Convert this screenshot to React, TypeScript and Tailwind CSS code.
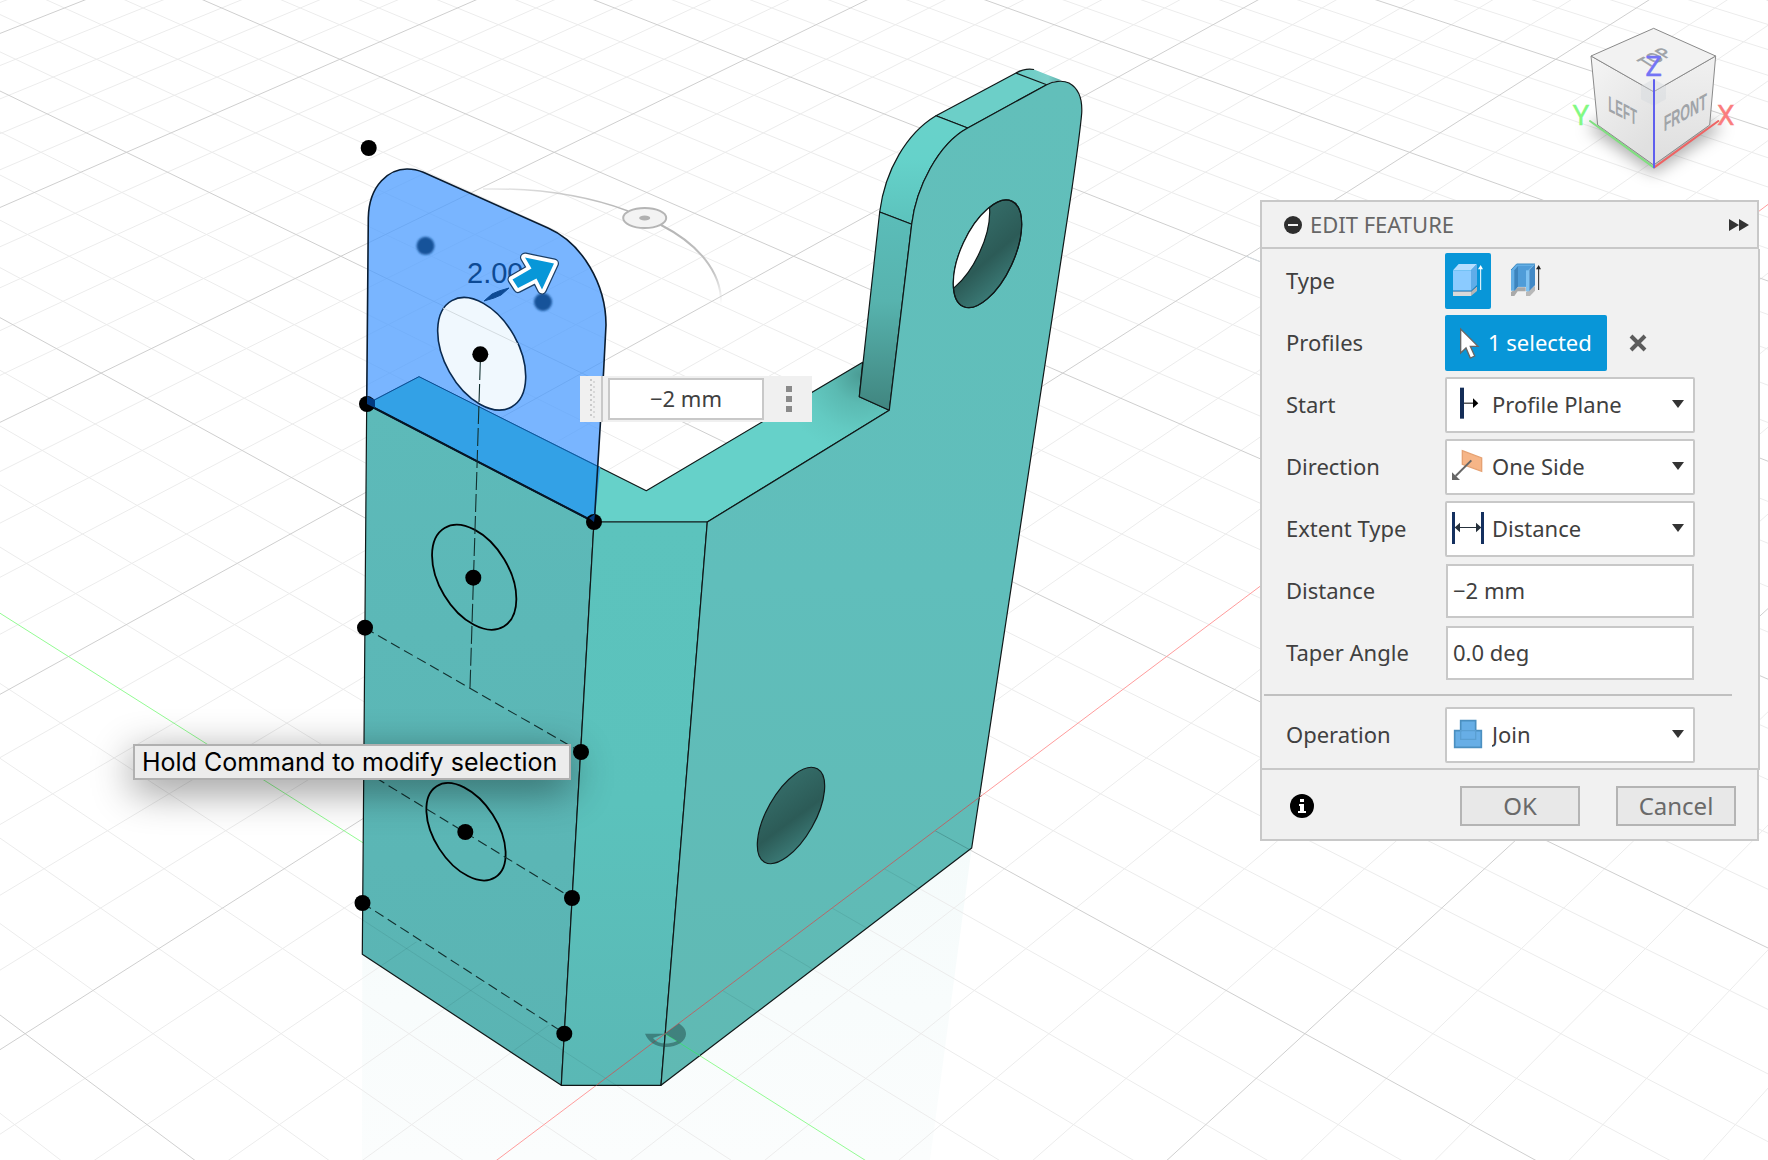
import type { ReactNode } from 'react';

/* ---------- ground grid, projected in perspective ---------- */

const project = (i: number, j: number): [number, number] => {
  const w = 1 + 0.08268 * (i + j);
  return [
    (665 + 347.3 * i - 292.6 * j) / w,
    (1033.7 - 134.31 * (i + j)) / w,
  ];
};

const segment = (a: [number, number], b: [number, number]) =>
  `M${a[0].toFixed(1)} ${a[1].toFixed(1)}L${b[0].toFixed(1)} ${b[1].toFixed(1)}`;

const lineX = (j: number) => segment(project(-2 - j, j), project(12 - j, j));
const lineY = (i: number) => segment(project(i, -2 - i), project(i, 12 - i));

const minorParts: string[] = [];
const majorParts: string[] = [];
for (let k = -25; k <= 50; k++) {
  const target = k % 5 === 0 ? majorParts : minorParts;
  if (k !== 0) target.push(lineX(k / 5), lineY(k / 5));
}
const minorGrid = minorParts.join('');
const majorGrid = majorParts.join('');
const axisX = lineX(0);
const axisY = lineY(0);

const points: [number, number][] = [
  [368.7, 148], [480.3, 354.3], [367, 404], [594, 522], [473.3, 577.7], [365, 627.7],
  [581, 752], [465.3, 832], [572, 898], [362.5, 903], [564.3, 1033.7],
];

const profile =
  'M366.7 404L368.3 218C369 184 390 169 407 169C413 169 418 170 423.3 172.3L548 228C582 243 606 284 606 325L603.5 373L594.3 522Z';
const rightFace =
  'M707.3 522L889.3 410.3L911.7 224.3C916 188 938 144 967.7 128L1046.7 84.7C1053 81 1063 80 1069 83C1078 88 1082.5 99 1081.7 113.3C1080 133 1076 160 1072 188.3L1035 430L971.7 848L661 1085.3Z';
const arrow =
  'M525 257.5L554 263.5L542 289.5L536.5 278.5L518 288L512.5 279.5L531.5 268.5Z';

function Viewport() {
  return (
    <svg
      className="absolute inset-0 h-full w-full"
      viewBox="0 0 1768 1160"
      preserveAspectRatio="xMidYMid slice"
      role="img"
      aria-label="Bracket model with selected profile"
    >
      <defs>
        <linearGradient id="leftFace" x1="0" y1="0" x2="0" y2="1">
          <stop offset="0" stopColor="#5dbab9" />
          <stop offset="1" stopColor="#5ab4b3" />
        </linearGradient>
        <linearGradient id="chamfer" x1="0" y1="0" x2="0" y2="1">
          <stop offset="0" stopColor="#5cc3bd" />
          <stop offset="0.5" stopColor="#5bc2bc" />
          <stop offset="1" stopColor="#5ab8b5" />
        </linearGradient>
        <linearGradient id="rightFace" x1="0" y1="0" x2="0" y2="1">
          <stop offset="0" stopColor="#62bfba" />
          <stop offset="0.5" stopColor="#60bebb" />
          <stop offset="1" stopColor="#60b9b3" />
        </linearGradient>
        <linearGradient id="strip" x1="0" y1="0" x2="0" y2="1">
          <stop offset="0" stopColor="#5bbdb9" />
          <stop offset="0.45" stopColor="#57b3ae" />
          <stop offset="1" stopColor="#40857f" />
        </linearGradient>
        <linearGradient id="bend" x1="0" y1="0" x2="0" y2="1">
          <stop offset="0" stopColor="#69d2ca" />
          <stop offset="0.4" stopColor="#65d2ca" />
          <stop offset="1" stopColor="#5cc2bc" />
        </linearGradient>
        <radialGradient id="topFace" gradientUnits="userSpaceOnUse" cx="860" cy="375" r="80">
          <stop offset="0" stopColor="#4b9c95" />
          <stop offset="0.35" stopColor="#5bbab2" />
          <stop offset="0.7" stopColor="#63cac2" />
          <stop offset="1" stopColor="#66d1c9" />
        </radialGradient>
        <linearGradient id="bore" x1="0" y1="0" x2="1" y2="1">
          <stop offset="0" stopColor="#37716d" />
          <stop offset="0.55" stopColor="#2c5b57" />
          <stop offset="1" stopColor="#418783" />
        </linearGradient>
        <linearGradient id="capEdge" x1="0" y1="0" x2="1" y2="0">
          <stop offset="0" stopColor="#66ccc5" />
          <stop offset="0.7" stopColor="#7dd0ca" />
          <stop offset="1" stopColor="#55aaa5" />
        </linearGradient>
        <linearGradient id="reflection" x1="0" y1="0" x2="0" y2="1">
          <stop offset="0" stopColor="#f5fbfb" />
          <stop offset="1" stopColor="#fbfdfd" />
        </linearGradient>
        <linearGradient id="arcLeft" x1="0" y1="0" x2="1" y2="0">
          <stop offset="0" stopColor="#b9b9b9" stopOpacity="0.3" />
          <stop offset="1" stopColor="#b5b5b5" />
        </linearGradient>
        <linearGradient id="arcRight" x1="0" y1="0" x2="0" y2="1">
          <stop offset="0" stopColor="#b5b5b5" />
          <stop offset="0.6" stopColor="#c4c4c4" />
          <stop offset="1" stopColor="#cfcfcf" stopOpacity="0" />
        </linearGradient>
        <filter id="soft" x="-50%" y="-50%" width="200%" height="200%">
          <feGaussianBlur stdDeviation="1" />
        </filter>
        <clipPath id="belowFloor">
          <path d="M362.5 908L563 1033.7H665L977 800L971.7 848L661 1085.3H561.3L362.3 954.3Z" />
        </clipPath>
        <clipPath id="throughHole">
          <ellipse cx="987.5" cy="253.8" rx="26.5" ry="58" transform="rotate(24.8 987.5 253.8)" />
        </clipPath>
      </defs>

      <rect width="1768" height="1160" fill="#fff" />
      <path d="M362.3 954L561 1085H661L971.7 848L930 1160H362Z" fill="url(#reflection)" />

      <g fill="none" strokeWidth="1">
        <path d={minorGrid} stroke="#ececec" />
        <path d={majorGrid} stroke="#cfcfcf" />
        <path d={axisX} stroke="#ff9c9c" />
        <path d={axisY} stroke="#93fb93" />
      </g>

      {/* rotation handle */}
      <path d="M483 189C535 188 585 195 628 211" fill="none" stroke="url(#arcLeft)" strokeWidth="1.5" />
      <path d="M661 225C698 244 722 272 721 304" fill="none" stroke="url(#arcRight)" strokeWidth="2" />
      <ellipse cx="644.7" cy="218" rx="21.5" ry="10" fill="#f3f3f3" stroke="#b5b5b5" strokeWidth="2" />
      <ellipse cx="644.7" cy="218" rx="5.5" ry="2.5" fill="#b0b0b0" />

      {/* solid body */}
      <g stroke="#101818" strokeWidth="1.2" strokeLinejoin="round">
        <path
          d="M366.7 404L419 376.7L646.3 490.7L862.7 362.3L859.3 396.7L889.3 410.3L707.3 522H594Z"
          fill="url(#topFace)"
        />
        <path d="M366.7 404L594 522L561.3 1085.3L362.3 954.3Z" fill="url(#leftFace)" />
        <path d="M594 522H707.3L661 1085.3H561.3Z" fill="url(#chamfer)" />
        <path
          d="M1016 73C1022 70 1028 68.5 1034 69.5L1062 80.5C1056 80.5 1051 82 1046.7 84.7Z"
          fill="url(#capEdge)"
          stroke="none"
        />
        <path d="M936 115.7L1016 73L1046.7 84.7L967.7 128Z" fill="#6ccfc8" />
        <path d="M1016 73C1022 69.5 1028 68.5 1034 69.5" fill="none" />
        <path d="M879.7 212C885 170 907 133 936 115.7L967.7 128C938 144 916 188 911.7 224.3Z" fill="url(#bend)" />
        <path d="M879.7 212L911.7 224.3L889.3 410.3L859.3 396.7Z" fill="url(#strip)" />
        <path d={rightFace} fill="url(#rightFace)" />
        <ellipse cx="987.5" cy="253.8" rx="26.5" ry="58" transform="rotate(24.8 987.5 253.8)" fill="url(#bore)" />
        <g clipPath="url(#throughHole)">
          <ellipse cx="955.5" cy="241.5" rx="26.5" ry="58" transform="rotate(24.8 955.5 241.5)" fill="#fff" />
        </g>
        <ellipse cx="987.5" cy="253.8" rx="26.5" ry="58" transform="rotate(24.8 987.5 253.8)" fill="none" />
        <ellipse cx="791" cy="815.5" rx="24" ry="53.6" transform="rotate(29.5 791 815.5)" fill="url(#bore)" />
      </g>

      {/* part of the floor seen over the body */}
      <g clipPath="url(#belowFloor)" fill="none">
        <path d={minorGrid} stroke="#205050" strokeOpacity="0.12" />
        <path d={majorGrid} stroke="#205050" strokeOpacity="0.3" />
        <path d={axisY} stroke="#3fdc7c" />
      </g>
      <path d={segment(project(-0.23, 0), project(1.19, 0))} stroke="#b5696a" strokeWidth="1" />
      <path
        d="M645 1033.7H665L679 1023.5C684 1027 686 1030 686 1034C686 1041 677 1047 666 1047C655 1047 648 1041 645 1033.7ZM653 1038C656 1042 661 1044 668 1043.5C672 1043 675 1042 677 1041L665 1033.7Z"
        fill="#1f4a48"
        fillOpacity="0.5"
        fillRule="evenodd"
      />

      {/* sketch profile */}
      <path d={profile} fill="#4a9bff" fillOpacity="0.74" />
      <path d="M366.7 404L419 376.7L600.3 467L594.3 522Z" fill="#33a1e6" />
      <path d="M366.7 404L419 376.7L599 467" fill="none" stroke="#0c4f93" strokeWidth="1" />
      <path d={profile} fill="none" stroke="#0a1c30" strokeWidth="1.6" />
      <ellipse
        cx="481.7"
        cy="353.8"
        rx="37.1"
        ry="61"
        transform="rotate(-29.3 481.7 353.8)"
        fill="#f0f8fe"
        stroke="#0a2a50"
        strokeWidth="1.6"
      />
      <path
        d={segment(project(4, 1), project(4, 0.77)) + segment([443, 308], [518, 344])}
        stroke="#d3dbe0"
        strokeWidth="1"
        clipPath="none"
      />
      <path d="M366.7 404L594.3 522" stroke="#061526" strokeWidth="2" />
      <ellipse cx="474.2" cy="577.2" rx="35" ry="57.5" transform="rotate(-31 474.2 577.2)" fill="none" stroke="#000" strokeWidth="1.8" />
      <ellipse cx="466" cy="831.7" rx="31.7" ry="54.2" transform="rotate(-32.8 466 831.7)" fill="none" stroke="#000" strokeWidth="1.8" />
      <g fill="none" stroke="#12302f" strokeWidth="1.1" strokeDasharray="10 5">
        <path d="M480.3 362L470 688" strokeDasharray="18 4" />
        <path d="M365 628L581 752" />
        <path d="M363 770L572 898" />
        <path d="M362.5 903L564 1033" />
      </g>
      {points.map(([x, y]) => (
        <circle key={`${x}-${y}`} cx={x} cy={y} r="8" fill="#000" />
      ))}
      <path d="M367 396L375 400V408L367 404ZM595 514L589 518L594 522Z" fill="#023a80" />
      <g fill="#17539a" filter="url(#soft)">
        <circle cx="425.5" cy="245.8" r="9" />
        <circle cx="543" cy="302" r="9" />
      </g>
      <text x="467" y="283" fontSize="29" fill="#0d4a94" fontFamily="'Liberation Sans', Arial, sans-serif">
        2.00
      </text>
      <path d="M484 301L492 294L499 291L509 288L501 295L494 298Z" fill="#0d4a94" stroke="#0d4a94" />
      <g strokeLinejoin="round">
        <path d={arrow} fill="#fff" stroke="#1c3f66" strokeWidth="10" />
        <path d={arrow} fill="#0797d8" stroke="#fff" strokeWidth="7.5" />
        <path d={arrow} fill="#0797d8" />
      </g>
    </svg>
  );
}

function ViewCube() {
  return (
    <svg className="h-[180px] w-52 self-end" viewBox="0 0 624 540" role="img" aria-label="View cube">
      <defs>
        <linearGradient id="cubeLeft" x1="0" y1="0" x2="0.6" y2="1">
          <stop offset="0" stopColor="#f5f5f5" />
          <stop offset="1" stopColor="#e0e0e0" />
        </linearGradient>
        <linearGradient id="cubeRight" x1="0" y1="0" x2="0" y2="1">
          <stop offset="0" stopColor="#f1f1f1" />
          <stop offset="1" stopColor="#dedede" />
        </linearGradient>
        <filter id="cubeShadow" x="-50%" y="-50%" width="200%" height="200%">
          <feGaussianBlur stdDeviation="24" />
        </filter>
      </defs>
      <path d="M80 350L281 280L490 350L281 490Z" fill="#000" fillOpacity="0.32" filter="url(#cubeShadow)" />
      <g stroke="#8a8a8a" strokeWidth="3" strokeLinejoin="round">
        <path d="M93 138L281 245V465L113 345Z" fill="url(#cubeLeft)" />
        <path d="M281 245L467 138L449 345L281 465Z" fill="url(#cubeRight)" />
        <path d="M281 55L467 138L281 245L93 138Z" fill="#f2f2f2" />
      </g>
      <path d="M281 207L318 228V268L281 287L243 268V228Z" fill="#d5d9dd" fillOpacity="0.45" />
      <g fontFamily="'Liberation Sans', Arial, sans-serif" fontWeight="bold" fontSize="66" fill="#a0a4a8">
        <text transform="matrix(0.52 0.27 0 1 145 302)">LEFT</text>
        <text transform="matrix(0.57 -0.31 0 1 311 365)">FRONT</text>
        <text transform="matrix(0.58 -0.31 0.8 0.5 264 175)">TOP</text>
      </g>
      <g strokeWidth="6" strokeLinecap="round">
        <path d="M90 333L281 472" stroke="#7fe07f" />
        <path d="M283 472L475 333" stroke="#ee6363" />
        <path d="M282 210V472" stroke="#5f5fee" />
      </g>
      <g fontFamily="Roboto, sans-serif" fontSize="84" textAnchor="middle">
        <text x="281" y="197" fill="#7474f5" stroke="#7474f5">Z</text>
        <text x="63" y="345" fill="#82f982" stroke="#82f982">Y</text>
        <text x="497" y="345" fill="#fa7d7d" stroke="#fa7d7d">X</text>
      </g>
    </svg>
  );
}

/* ---------- icons ---------- */

function Icon({ box, children }: { box: string; children: ReactNode }) {
  return (
    <svg className="h-14 w-[46px] shrink-0" viewBox={box} aria-hidden="true">
      {children}
    </svg>
  );
}

const solidIcon = (
  <Icon box="585 189 138 168">
    <path d="M609 303H663V318H609Z" fill="#d9d9d9" />
    <path d="M663 303L681 288V303L663 318Z" fill="#b5b5b5" />
    <path d="M609 241H663V302H609Z" fill="#8bcbff" />
    <path d="M609 241L626 222H681L663 241Z" fill="#b4deff" />
    <path d="M663 241L681 222V285L663 302Z" fill="#5fade9" />
    <path d="M609 303.5H664L681 288" fill="none" stroke="#1f6ba8" strokeWidth="2.5" />
    <path d="M692 300V230" stroke="#fff" strokeWidth="3" />
    <path d="M684 238L692 225L699 238Z" fill="#fff" />
  </Icon>
);

const thinIcon = (
  <Icon box="759 189 138 168">
    <path d="M783 306L805 292H827V304H803L793 318H783Z" fill="#a9a9a9" />
    <path d="M828 306L855 288V302L840 318H828Z" fill="#b8b8b8" />
    <path d="M783 240L800 222H855L838 240V302H828V290H804L793 302H783Z" fill="#63aee5" />
    <path d="M804 228H846L828 246V290H804Z" fill="#4f9cd8" />
    <path d="M793 241L804 228V290L793 302Z" fill="#3d84bd" />
    <path d="M828 241H838V304H828Z" fill="#7fc2f2" />
    <path d="M838 240L855 222V286L838 302Z" fill="#4189c6" />
    <path d="M783 240L800 222H855" fill="none" stroke="#3c8ac2" strokeWidth="3" />
    <path d="M866 300V230" stroke="#222" strokeWidth="3" />
    <path d="M858 238L866 225L873 238Z" fill="#222" />
  </Icon>
);

const startIcon = (
  <Icon box="585 562 138 168">
    <path d="M630 594H642V687H630Z" fill="#142d57" />
    <path d="M642 640.5H672" stroke="#000" strokeWidth="3" />
    <path d="M669 626L685 640.5L669 655Z" fill="#000" />
  </Icon>
);

const directionIcon = (
  <Icon box="585 747 138 168">
    <path d="M637 782L695 804V844L637 823Z" fill="#f6b587" stroke="#e6a273" strokeWidth="4" />
    <path d="M664 811L617 858" stroke="#666" strokeWidth="6" />
    <path d="M606 847V870H630Z" fill="#666" />
  </Icon>
);

const extentIcon = (
  <Icon box="585 -27 138 168">
    <path d="M606 6H615V102H606ZM693 6H702V102H693Z" fill="#14305f" />
    <path d="M622 52.5H686" stroke="#25303b" strokeWidth="3" />
    <path d="M614 52.5L630 38V67ZM694 52.5L678 38V67Z" fill="#25303b" />
  </Icon>
);

const joinIcon = (
  <Icon box="585 591 138 168">
    <path d="M632 632H677V662H694V712H614V662H632Z" fill="#67aee6" stroke="#4b8fc0" strokeWidth="5" />
    <path d="M632 662H677V688H632Z" fill="none" stroke="#5a9fd2" strokeWidth="4" />
  </Icon>
);

/* ---------- panel ---------- */

function Row({ label, htmlFor, children }: { label: string; htmlFor?: string; children: ReactNode }) {
  return (
    <div className="flex h-14 items-center">
      <label htmlFor={htmlFor} className="w-[159px] shrink-0 pb-0.5 whitespace-nowrap">
        {label}
      </label>
      {children}
    </div>
  );
}

function SelectField({ id, label, value, icon }: { id: string; label: string; value: string; icon: ReactNode }) {
  return (
    <Row label={label} htmlFor={id}>
      <div className="relative h-14 w-[250px]">
        <select
          id={id}
          className="h-full w-full appearance-none rounded-xs border-2 border-[#c8c8c8] bg-white pb-0.5 pl-[45px] text-[#404040] outline-none"
        >
          <option>{value}</option>
        </select>
        <div className="pointer-events-none absolute inset-y-0 left-0">{icon}</div>
        <svg className="pointer-events-none absolute top-[23px] right-[11px] h-2 w-3" viewBox="0 0 12 8" aria-hidden="true">
          <path d="M0 0H12L6 8Z" fill="#333" />
        </svg>
      </div>
    </Row>
  );
}

function TextField({ id, label, value }: { id: string; label: string; value: string }) {
  return (
    <Row label={label} htmlFor={id}>
      <input
        id={id}
        defaultValue={value}
        className="ml-px h-[54px] w-[248px] border-2 border-[#c8c8c8] bg-white pb-0.5 pl-[5px] text-[#404040] outline-none"
      />
    </Row>
  );
}

function EditPanel() {
  return (
    <section className="w-[500px] text-[22px] leading-7 text-[#404040]" aria-label="Edit feature">
      <header className="mr-px flex h-[49px] items-center border-2 border-[#c8c8c8] bg-[#f1f1f1] pr-2 pl-[22px]">
        <button type="button" aria-label="Collapse" className="mr-2">
          <svg className="h-[18px] w-[18px]" viewBox="0 0 18 18" aria-hidden="true">
            <circle cx="9" cy="9" r="9" fill="#2e2e2e" />
            <path d="M4 9H14" stroke="#f1f1f1" strokeWidth="2" />
          </svg>
        </button>
        <h2 className="pb-0.5 text-[#666]">EDIT FEATURE</h2>
        <button type="button" aria-label="Dock panel" className="ml-auto">
          <svg className="h-3 w-5" viewBox="0 0 20 12" aria-hidden="true">
            <path d="M0 0L10 6L0 12ZM10 0L20 6L10 12Z" fill="#333" />
          </svg>
        </button>
      </header>

      <div className="flex flex-col gap-1.5 border-x-2 border-b-2 border-[#c8c8c8] bg-[#f1f1f1] pt-1 pb-[5px] pl-6">
        <Row label="Type">
          <button type="button" aria-label="Extrude" className="rounded-xs bg-[#0896d8]">
            {solidIcon}
          </button>
          <button type="button" aria-label="Thin extrude" className="ml-3">
            {thinIcon}
          </button>
        </Row>
        <Row label="Profiles">
          <button
            type="button"
            className="flex h-14 w-[162px] items-center rounded-xs bg-[#0896d8] text-white"
          >
            <svg className="mr-2 ml-[14px] h-8 w-[21px]" viewBox="627 408 63 96" aria-hidden="true">
              <path
                d="M632 414V486L648 471L661 501L674 495L661 466H684Z"
                fill="#fff"
                stroke="#666"
                strokeWidth="4"
              />
            </svg>
            <span className="pb-0.5">1 selected</span>
          </button>
          <button type="button" aria-label="Clear profiles" className="ml-[22px]">
            <svg className="h-[18px] w-[18px]" viewBox="0 0 18 18" aria-hidden="true">
              <path d="M2 2L16 16M16 2L2 16" stroke="#5c5c5c" strokeWidth="4" />
            </svg>
          </button>
        </Row>
        <SelectField id="start" label="Start" value="Profile Plane" icon={startIcon} />
        <SelectField id="direction" label="Direction" value="One Side" icon={directionIcon} />
        <SelectField id="extent" label="Extent Type" value="Distance" icon={extentIcon} />
        <TextField id="distance" label="Distance" value="−2 mm" />
        <TextField id="taper" label="Taper Angle" value="0.0 deg" />
        <hr className="mt-[7px] mr-[26px] mb-[5px] -ml-[22px] border-t-2 border-[#c0c0c0]" />
        <SelectField id="operation" label="Operation" value="Join" icon={joinIcon} />
      </div>

      <footer className="mr-px flex h-[71px] items-center gap-9 border-x-2 border-b-2 border-[#c8c8c8] bg-[#f1f1f1] pt-0.5 pr-[21px] pl-7">
        <button type="button" aria-label="Information" className="mr-auto">
          <svg className="h-6 w-6" viewBox="0 0 24 24" aria-hidden="true">
            <circle cx="12" cy="12" r="12" fill="#000" />
            <path d="M10 5H14V8H10ZM9 10H14V17H16V19H8V17H10V12H9Z" fill="#fff" />
          </svg>
        </button>
        <button type="button" className="h-10 w-[120px] border-2 border-[#b4b4b4] bg-[#e8e8e8] text-2xl leading-8 text-[#6a6a6a]">
          OK
        </button>
        <button type="button" className="h-10 w-[120px] border-2 border-[#b4b4b4] bg-[#e8e8e8] text-2xl leading-8 text-[#6a6a6a]">
          Cancel
        </button>
      </footer>
    </section>
  );
}

function DimensionInput() {
  return (
    <div className="absolute top-[376px] left-[580px] flex h-[46px] items-center bg-[#f0f0f0] text-[22px]">
      <svg className="mx-2 h-10 w-[13px]" viewBox="0 0 13 40" aria-hidden="true">
        <path d="M3 0V40" stroke="#c9c9c9" strokeWidth="2" strokeDasharray="2 3" />
        <path d="M6 2V40" stroke="#d8d8d8" strokeWidth="2" strokeDasharray="2 3" />
      </svg>
      <div className="-ml-2 h-full w-[2px] bg-[#c8c8c8]" />
      <input
        aria-label="Extrude distance"
        defaultValue="−2 mm"
        className="ml-[5px] h-[42px] w-[156px] border-2 border-[#c8c8c8] bg-white pb-0.5 text-center text-[#404040] outline-none"
      />
      <button type="button" aria-label="More options" className="mr-5 ml-[22px]">
        <svg className="h-7 w-[6px]" viewBox="0 0 6 28" aria-hidden="true">
          <path d="M0 1H6V7H0ZM0 11H6V17H0ZM0 21H6V27H0Z" fill="#8a8a8a" />
        </svg>
      </button>
    </div>
  );
}

export default function App() {
  return (
    <main className="relative min-h-screen overflow-hidden bg-white font-['Noto_Sans',sans-serif]">
      <Viewport />
      <div className="relative mr-2 ml-auto flex w-[500px] flex-col pt-2.5">
        <div className="-mr-2 flex flex-col">
          <ViewCube />
        </div>
        <div className="mt-2.5">
          <EditPanel />
        </div>
      </div>
      <DimensionInput />
      <div
        role="tooltip"
        className="absolute top-[744px] left-[133px] border-2 border-[#b0b0b0] bg-[#ececec] pr-3 pl-[7px] font-['Inter',sans-serif] text-[25px] leading-8 whitespace-nowrap text-black shadow-[0_10px_40px_rgba(0,0,0,0.45)]"
      >
        Hold Command to modify selection
      </div>
    </main>
  );
}
